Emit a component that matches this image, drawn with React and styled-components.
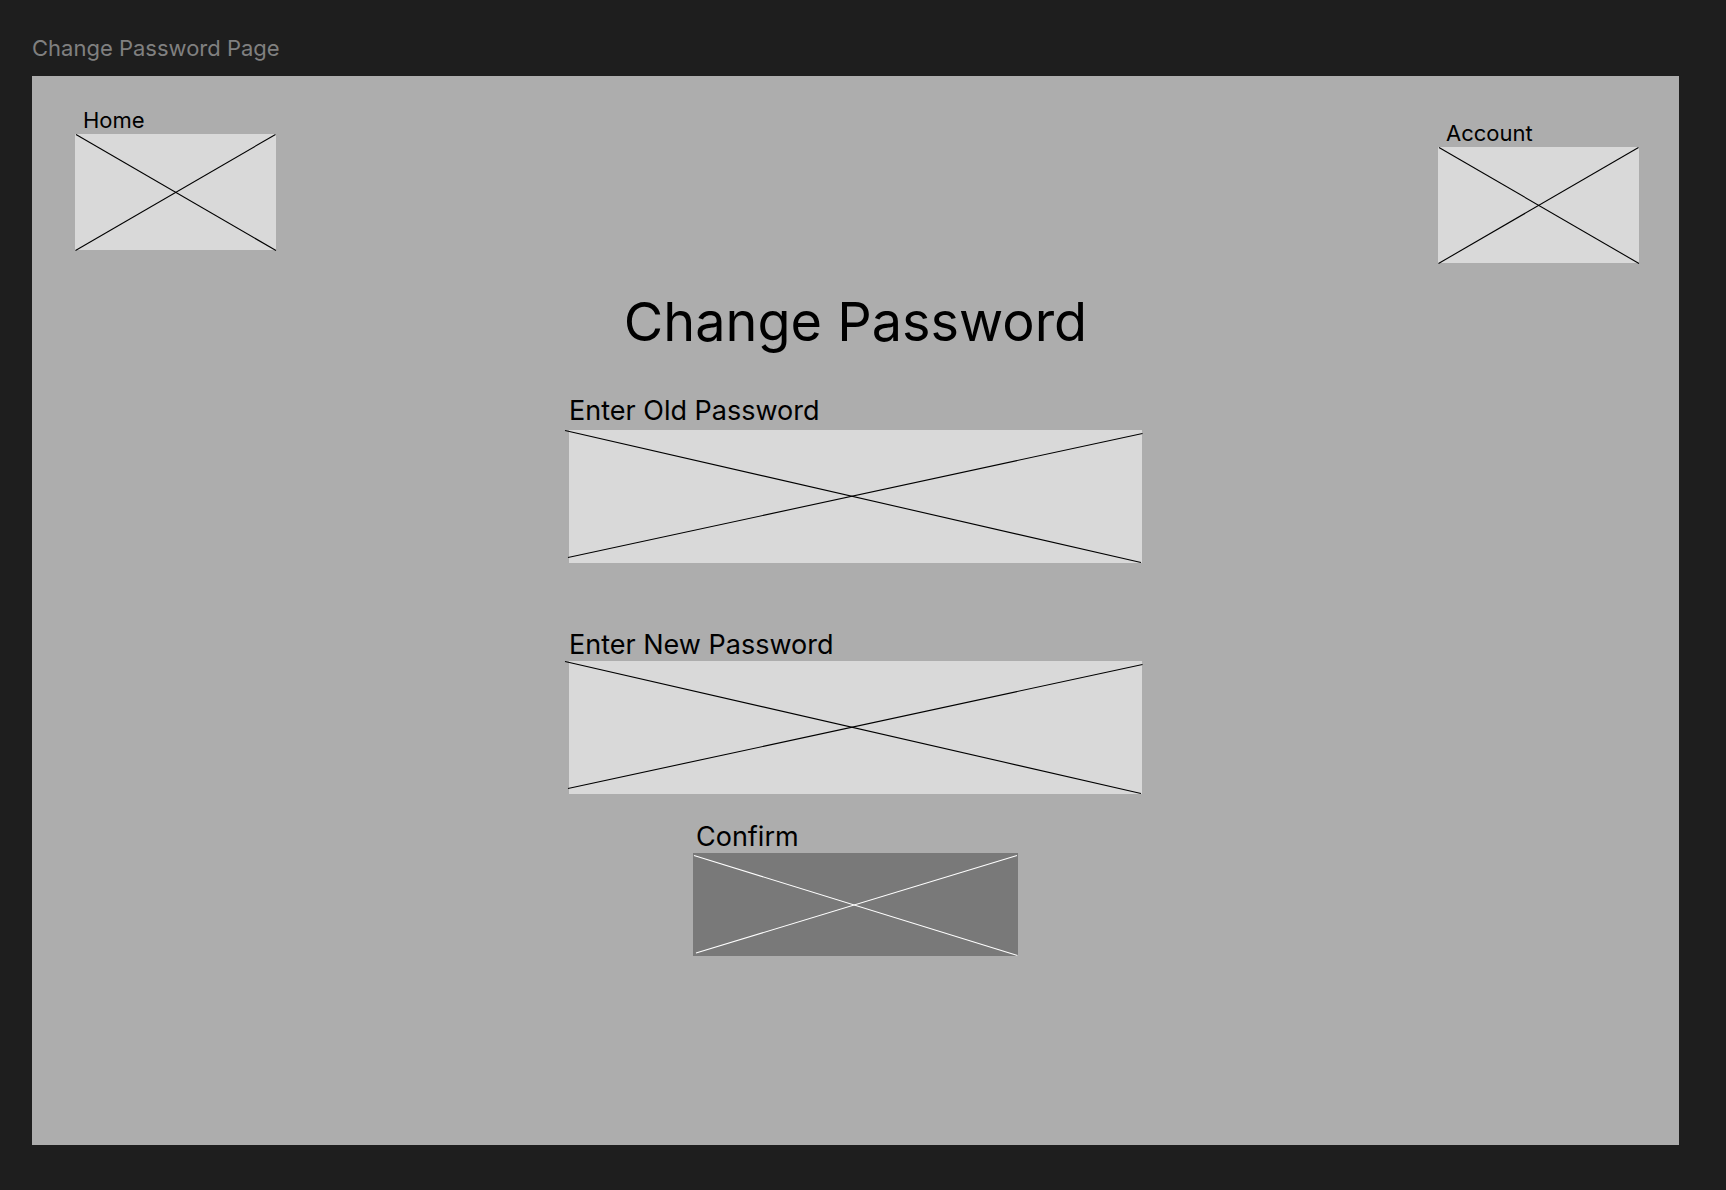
import React from "react";
import styled, { createGlobalStyle } from "styled-components";

const GlobalStyle = createGlobalStyle`
  *, *::before, *::after { box-sizing: border-box; }
  body {
    margin: 0;
    background: #1e1e1e;
    font-family: Inter, "Liberation Sans", sans-serif;
    color: #000;
  }
`;

const Canvas = styled.div`
  display: flex;
  flex-direction: column;
  gap: 14px;
  min-height: 100vh;
  padding: 34px 47px 45px 32px;
`;

const FrameName = styled.div`
  font-size: 22px;
  line-height: 28px;
  color: #808080;
`;

const Frame = styled.main`
  flex: 1;
  display: flex;
  flex-direction: column;
  padding: 30px 40px;
  background: #adadad;
`;

const Header = styled.nav`
  display: flex;
  justify-content: space-between;
  align-items: flex-start;
  padding-left: 3px;
`;

const NavLink = styled.a`
  display: flex;
  flex-direction: column;
  width: 201px;
  margin-top: ${({ $drop }) => $drop || 0}px;
  color: inherit;
  text-decoration: none;
`;

const NavText = styled.span`
  padding-left: 8px;
  font-size: 22px;
  line-height: 28px;
`;

const Box = styled.span`
  display: block;
  position: relative;
  width: 100%;
  height: ${({ $height }) => $height}px;
  background: ${({ $dark }) => ($dark ? "#797979" : "#d9d9d9")};
  color: ${({ $dark }) => ($dark ? "#fff" : "#000")};
`;

const CrossSvg = styled.svg`
  position: absolute;
  inset: 0;
  width: 100%;
  height: 100%;
  overflow: visible;
  pointer-events: none;

  line {
    stroke: currentColor;
    stroke-width: 1.1;
    vector-effect: non-scaling-stroke;
  }
`;

const Form = styled.form`
  display: flex;
  flex-direction: column;
  align-items: center;
  width: 573px;
  max-width: 100%;
  margin: 25px auto 0;
`;

const Title = styled.h1`
  margin: 0 0 39px;
  font-size: 54px;
  font-weight: 400;
  line-height: 68px;
  white-space: nowrap;
`;

const Field = styled.div`
  display: flex;
  flex-direction: column;
  gap: ${({ $gap }) => $gap || 0}px;
  width: 100%;
  margin-bottom: ${({ $after }) => $after}px;
`;

const FieldLabel = styled.label`
  font-size: 27px;
  line-height: 32px;
`;

const PasswordInput = styled.input`
  display: block;
  width: 100%;
  height: 100%;
  padding: 0 24px;
  border: 0;
  background: transparent;
  font: inherit;
  font-size: 27px;
  color: inherit;
`;

const ConfirmButton = styled.button`
  display: flex;
  flex-direction: column;
  width: 325px;
  padding: 0;
  border: 0;
  background: none;
  font: inherit;
  color: inherit;
  text-align: left;
  cursor: pointer;
`;

const ConfirmText = styled.span`
  padding-left: 3px;
  font-size: 27px;
  line-height: 32px;
`;

function Cross({ size, lines }) {
  return (
    <CrossSvg viewBox={`0 0 ${size[0]} ${size[1]}`} preserveAspectRatio="none" aria-hidden="true">
      {lines.map(([x1, y1, x2, y2]) => (
        <line key={`${x1}-${y1}`} x1={x1} y1={y1} x2={x2} y2={y2} />
      ))}
    </CrossSvg>
  );
}

const NAV_LINES = [
  [1, 0.5, 201, 116.5],
  [0.5, 116.5, 200.5, 0.5],
];
const FIELD_LINES = [
  [-4, 0.5, 572, 132.5],
  [-1, 127.5, 573.5, 3.5],
];
const CONFIRM_LINES = [
  [1, 2.5, 324.5, 102.5],
  [3, 100, 324, 2.5],
];

function PlaceholderLink({ href, text, drop }) {
  return (
    <NavLink href={href} $drop={drop}>
      <NavText>{text}</NavText>
      <Box $height={116}>
        <Cross size={[201, 116]} lines={NAV_LINES} />
      </Box>
    </NavLink>
  );
}

function PasswordField({ id, label, gap, after, autoComplete }) {
  return (
    <Field $gap={gap} $after={after}>
      <FieldLabel htmlFor={id}>{label}</FieldLabel>
      <Box $height={133}>
        <PasswordInput id={id} type="password" autoComplete={autoComplete} />
        <Cross size={[573, 133]} lines={FIELD_LINES} />
      </Box>
    </Field>
  );
}

export default function App() {
  return (
    <>
      <GlobalStyle />
      <Canvas>
        <FrameName>Change Password Page</FrameName>
        <Frame>
          <Header>
            <PlaceholderLink href="#home" text="Home" />
            <PlaceholderLink href="#account" text="Account" drop={13} />
          </Header>
          <Form onSubmit={(event) => event.preventDefault()}>
            <Title>Change Password</Title>
            <PasswordField
              id="old-password"
              label="Enter Old Password"
              gap={3}
              after={66}
              autoComplete="current-password"
            />
            <PasswordField
              id="new-password"
              label="Enter New Password"
              after={27}
              autoComplete="new-password"
            />
            <ConfirmButton type="submit">
              <ConfirmText>Confirm</ConfirmText>
              <Box $height={103} $dark>
                <Cross size={[325, 103]} lines={CONFIRM_LINES} />
              </Box>
            </ConfirmButton>
          </Form>
        </Frame>
      </Canvas>
    </>
  );
}
